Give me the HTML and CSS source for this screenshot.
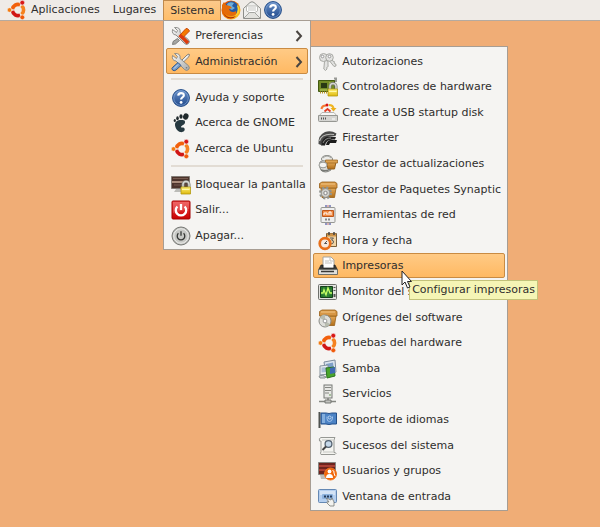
FILE: index.html
```html
<!DOCTYPE html>
<html lang="es">
<head>
<meta charset="utf-8">
<meta name="viewport" content="width=device-width, initial-scale=1">
<title>Escritorio</title>
<link rel="stylesheet" href="styles.css">
</head>
<body>
<svg class="defs" aria-hidden="true">
  <defs>
    <linearGradient id="steel" x2="1" y2="1"><stop stop-color="#fafafa"/><stop offset="1" stop-color="#a9aaa8"/></linearGradient>
    <linearGradient id="blue" x2="0" y2="1"><stop stop-color="#6d94cb"/><stop offset="1" stop-color="#1d4689"/></linearGradient>
    <linearGradient id="gold" x2="0" y2="1"><stop stop-color="#fff27a"/><stop offset="1" stop-color="#dfb80b"/></linearGradient>
    <linearGradient id="box" x2="0" y2="1"><stop stop-color="#e6ab5a"/><stop offset="1" stop-color="#b06d18"/></linearGradient>
    <linearGradient id="red" x2="0" y2="1"><stop stop-color="#ef4a4a"/><stop offset="1" stop-color="#c80000"/></linearGradient>
    <linearGradient id="fox" x2="1" y2="1"><stop stop-color="#d83a00"/><stop offset=".55" stop-color="#f08300"/><stop offset="1" stop-color="#ffd93a"/></linearGradient>

    <symbol id="ubuntu" viewBox="0 0 20 20">
      <g fill="none" stroke-width="3.6">
        <path d="M5.450 9.220A5.600 5.600 0 0 1 13.100 4.810" stroke="#f2600c"/>
        <path d="M14.450 5.590A5.600 5.600 0 0 1 14.450 14.410" stroke="#f58220"/>
        <path d="M13.100 15.190A5.600 5.600 0 0 1 5.450 10.780" stroke="#d01616"/>
      </g>
      <g stroke="#f5f4f2" stroke-width=".6"><circle cx="2.500" cy="10" r="2.300" fill="#f47b10"/><circle cx="15.300" cy="2.700" r="2.400" fill="#d81717"/><circle cx="15.300" cy="17.300" r="2.400" fill="#f05a0a"/></g>
    </symbol>
    <symbol id="firefox" viewBox="0 0 20 20">
      <circle cx="10" cy="10" r="9.500" fill="url(#fox)"/>
      <circle cx="10.500" cy="8.400" r="7.100" fill="#245aa3"/><path d="M6 4q3-3 7-1l-2 3 3 2-3 2-4-2z" fill="#6caed8"/>
      <path d="M1 5 3 2l2 3 4 1 2 2-3 1 1 2q3 2 6 0 2 4-4 5-8 0-10-7z" fill="#e46b08"/>
      <path d="M17 5q4 8-3 11 4-5 2-10z" fill="#ffd52d"/><path d="M2 12q4 8 13 4-5 5-11 0z" fill="#a92a09"/>
    </symbol>
    <symbol id="mail" viewBox="0 0 20 20">
      <path d="M1.500 8.500 8 2.500q2-1.500 4 0l6.500 6V18.500h-17z" fill="#eeeeec" stroke="#8d8e8a"/>
      <path d="M4.500 6h11v5L10 14l-5.500-3z" fill="#fff" stroke="#bcbcb8"/><path d="M6 8h8M6 10h8" stroke="#c5c5c1"/>
      <path d="m2 18 5.500-5.500h5L18 18" fill="#e2e2de" stroke="#a3a4a0"/>
    </symbol>
    <symbol id="help" viewBox="0 0 20 20">
      <circle cx="10" cy="10" r="8.400" fill="url(#blue)" stroke="#204a87"/><circle cx="10" cy="10" r="7.300" fill="none" stroke="#83a5d5" stroke-width=".7"/>
      <path d="M7.200 7.700q.2-2.600 2.900-2.600t2.700 2.300c0 1.800-2.700 2-2.700 4.200" fill="none" stroke="#fff" stroke-width="2.200"/><circle cx="10.100" cy="14.400" r="1.400" fill="#fff"/>
    </symbol>
    <symbol id="wrench" viewBox="0 0 20 20">
      <path d="M3.500 1.500 6.500 4.500 5.500 6.500 1.500 3.500Q.5 8.500 5 9l8.500 8.500q2 1.800 3.900.2t.1-4L9 6.500q1-5.500-5.500-5z" fill="url(#steel)" stroke="#858682" stroke-width=".9"/><circle cx="15.500" cy="15.800" r=".8" fill="#777"/>
    </symbol>
    <symbol id="prefs" viewBox="0 0 20 20">
      <use href="#wrench"/>
      <path d="m6.500 12.500 2 2L4.500 18l-3 .5.500-3z" fill="#a5a6a3" stroke="#61625f" stroke-width=".7"/><path d="M9 9 15 2.500q2-.500 3.500 2.500L11.500 12z" fill="#f57900" stroke="#c94808"/><path d="m8.500 9 5 4.500 3.500 3.500" stroke="#dd3b0d" stroke-width="3.400"/>
    </symbol>
    <symbol id="admin" viewBox="0 0 20 20">
      <path d="m8 11 8-8 2-1 .5 1-1 2-8 8z" fill="#eee" stroke="#6b6c69" stroke-width=".8"/><use href="#wrench"/>
      <path d="m2 15 5-4.500 3 3L5 18q-2 1.500-3.500 0T2 15z" fill="#7c9fca" stroke="#315b91"/><path d="m3 16.500 4-4" stroke="#c9dbf1"/>
    </symbol>
    <symbol id="gnome" viewBox="0 0 20 20">
      <path d="M13.500 7.500C8 6 4 8 4 11.500c0 3 2 6.500 5 7.500 3 .8 5.500-1.500 4.500-3.500s-3 0-3.500-1.500 6-2.500 3.500-6.500z" fill="#263940"/><g fill="#20292c"><ellipse cx="14.800" cy="3.500" rx="2.700" ry="3.200" transform="rotate(22 14.800 3.500)"/><ellipse cx="10" cy="3.500" rx="1.600" ry="2.300"/><ellipse cx="6.500" cy="5.200" rx="1.300" ry="2"/><ellipse cx="3.800" cy="7.500" rx="1.100" ry="1.600"/></g>
    </symbol>
    <symbol id="padlock" viewBox="0 0 20 20">
      <path d="M12 13V9.500a3 3 0 0 1 6 0V13" fill="none" stroke="#777872" stroke-width="3"/><path d="M12 13V9.500a3 3 0 0 1 6 0V13" fill="none" stroke="#d6d6d1" stroke-width="1.500"/><path d="M10 12h9.500v7H10z" fill="url(#gold)" stroke="#b39a12" stroke-width=".8"/><path d="M11 14.500h7.500" stroke="#fff8a8"/>
    </symbol>
    <symbol id="lock" viewBox="0 0 20 20"><path d="M.500 1.500h18v12H.500z" fill="#4d342c" stroke="#837d77"/><path d="M1 7h17" stroke="#aa8d7c" stroke-width="2"/><path d="M2 3.500h15M3 10h14" stroke="#765b50"/><path d="M5 14h8v3H3z" fill="#bcbcb8"/><use href="#padlock"/></symbol>
    <symbol id="logout" viewBox="0 0 20 20"><rect x="1" y="1" width="18" height="18" rx="1" fill="url(#red)" stroke="#a40000"/><path d="M2 2h16v7Q10 11 2 13z" fill="#fff" opacity=".16"/><path d="M6.400 6.500a5.200 5.200 0 1 0 7.200 0M10 4v6" fill="none" stroke="#fff" stroke-width="2.300"/></symbol>
    <symbol id="power" viewBox="0 0 20 20"><circle cx="10" cy="10" r="9" fill="#babbb8" stroke="#777875"/><circle cx="10" cy="10" r="7.300" fill="#c7c8c5" stroke="#eeeeec"/><path d="M7.400 7.300a3.800 3.800 0 1 0 5.200 0M10 5.300v4.500" fill="none" stroke="#343634" stroke-width="1.300"/></symbol>
    <symbol id="keys" viewBox="0 0 20 20"><g fill="#e3e3e1" stroke="#a0a19c" stroke-width=".9"><path d="M8 8.500 6.500 9.500 5.800 17l1.700 1.500 1.500-1.500-.3-1.500 1.500-1-.2-1.500L10 9z"/><path d="m10 7 6 7.500 2-.5-.2-2-1.500-.5v-2l-1.500-.3L13 6z"/><circle cx="5.500" cy="5.500" r="4"/><circle cx="11.500" cy="5.500" r="3.800"/></g><circle cx="4.500" cy="4.500" r="1.300" fill="#fff" stroke="#999"/><circle cx="11.500" cy="4.500" r="1.300" fill="#fff" stroke="#999"/></symbol>
    <symbol id="drivers" viewBox="0 0 20 20"><path d="M16 1.500h2V4h-2v10" fill="none" stroke="#999a96" stroke-width="2"/><path d="M.500 3.500h16v11H.500z" fill="#738b27" stroke="#435910"/><path d="M3 6h6v5H3z" fill="#293913"/><path d="M11 6h3M11 8h3M2 13h7" stroke="#bed064"/><path d="M2 15.500h8" stroke="#bd9a25" stroke-width="2" stroke-dasharray="1 1"/><use href="#padlock"/></symbol>
    <symbol id="usb" viewBox="0 0 20 20"><path d="M1 13 4 9.500h12l3 3.500z" fill="#f6f6f5" stroke="#b7b7b3"/><path d="M.500 12.500h19v5q0 1-1 1h-17q-1 0-1-1z" fill="#d5d5d2" stroke="#969793"/><path d="M3 15.500h6" stroke="#555" stroke-width="2" stroke-dasharray="1 1"/><path d="M14 16h3" stroke="#fff"/><path d="M3.500 6Q4 2.500 8 2.500" fill="none" stroke="#f57930" stroke-width="2.200"/><path d="M11 2q4 0 4.500 3.500" fill="none" stroke="#efb522" stroke-width="2.200"/><path d="m12.500 5 6 0-3 3.500z" fill="#edb017"/><path d="m6.500 8.500 3-2.500 3 2.500" fill="none" stroke="#e13a23" stroke-width="1.800"/><circle cx="9" cy="2" r="1.500" fill="#d81212"/></symbol>
    <symbol id="fire" viewBox="0 0 20 20"><path d="M.500 16Q0 7 7 4q6-2 11.500 1.500l-1 2.500Q6 7 3 17z" fill="#4a4a49"/><path d="M1.500 13Q4 5 16 6.500" fill="none" stroke="#b9b9b6" stroke-width="1.200"/><path d="M3 17.500Q4 8 12 8.500l6 .5-1 2.500Q8 10.500 7 17.500z" fill="#222"/><path d="M8 17q1-5 5-5h6l-1 3h-6l-1 2z" fill="#1c1c1c"/><path d="M5 15q2-5 8-5" fill="none" stroke="#8b8b88"/></symbol>
    <symbol id="crate" viewBox="0 0 20 20"><path d="M3 8h15l-1.500 9.500H4z" fill="url(#box)" stroke="#986018" stroke-width=".8"/><path d="M1.500 3.500 4 2h13l2 1.500V8H1.500z" fill="#d79745" stroke="#986018" stroke-width=".8"/><path d="M3 4h14" stroke="#f3c787"/><path d="M8 11h5" stroke="#75460b" stroke-width="1.500"/></symbol>
    <symbol id="update" viewBox="0 0 20 20"><ellipse cx="9" cy="5" rx="5.500" ry="3.500" fill="#ecece9" stroke="#858782"/><path d="M5 4q4-4 8 0" fill="none" stroke="#a4a5a1"/><path d="M2 8q4-3 8 1l3 7q-6 4-10 0-3-4-1-8z" fill="#d9d9d5" stroke="#858782"/><path d="M8.500 8h9.500l-1.500 7h-6.500z" fill="url(#box)" stroke="#96601a"/><path d="M7.500 6h12v3h-12z" fill="#dda250" stroke="#96601a" stroke-width=".7"/><ellipse cx="5" cy="11" rx="4" ry="2.800" fill="#f4f4f2" stroke="#999a96"/><path d="M3 16q5 2 9-1" fill="none" stroke="#777975" stroke-width="1.500"/></symbol>
    <symbol id="package" viewBox="0 0 20 20"><use href="#crate"/><g transform="translate(7.500 13)"><circle r="5.400" fill="none" stroke="#91938f" stroke-width="2.200" stroke-dasharray="2.200 2.041"/><circle r="4.400" fill="#cfcfcb" stroke="#91938f"/><circle r="1.700" fill="#f6f6f4" stroke="#888"/></g></symbol>
    <symbol id="network" viewBox="0 0 20 20"><path d="M8 0v3M12 0v3M8 17v3M12 17v3" stroke="#6f76b4" stroke-width="1.500"/><path d="M10 0v3M10 17v3" stroke="#bd6f6f"/><rect x="3" y="2.500" width="14" height="15" rx="1" fill="#eee" stroke="#969793"/><path d="M4.500 5.500h11v6h-11z" fill="#f18a43" stroke="#bd571c"/><path d="M6 10V8h3v2M11 10V7h2v3" fill="none" stroke="#fff"/><path d="M7 14.500h6" stroke="#888" stroke-width="2" stroke-dasharray="2 1"/></symbol>
    <symbol id="clock" viewBox="0 0 20 20"><path d="M8.500 2.500h10v13h-10z" fill="#f1d5a6" stroke="#795f3c"/><path d="M9 4h9" stroke="#cc9145" stroke-width="3"/><path d="M11 1v3M16 1v3" stroke="#444" stroke-width="1.500"/><path d="M12 7h3.500l-2 2q2 0 2 2t-3 2" fill="none" stroke="#555"/><circle cx="7" cy="12.500" r="5.300" fill="#f7e9dc" stroke="#e8701a" stroke-width="2.700"/><path d="M6.500 12.500 9 10M6.500 12.500h2.500" stroke="#555"/></symbol>
    <symbol id="printer" viewBox="0 0 20 20"><path d="M5 1h8l3 3v9H5z" fill="#fff" stroke="#a5a5a0"/><path d="M12 1v4h4M7 5h4M7 7h7" fill="none" stroke="#c1c1bd"/><path d="M3 9h2v3h11V9h1l2.500 5H.500z" fill="#3a3b39" stroke="#1e1f1d" stroke-width=".7"/><path d="M.500 13.500h19v5H.500z" fill="#dfdfdc" stroke="#6e706b"/><path d="M3 15.500h13" stroke="#383938" stroke-width="1.500"/></symbol>
    <symbol id="monitor" viewBox="0 0 20 20"><rect x=".500" y="2.500" width="18" height="15" rx="1" fill="#e2e2df" stroke="#6e706c"/><path d="M2.500 4.500h12v11h-12z" fill="#23762b" stroke="#143d19"/><path d="M3 8h11M3 12h11M6 5v10M10 5v10" stroke="#499d4b" stroke-width=".6"/><path d="M3 11h2l1-3 2 5 2-7 2 5h2" fill="none" stroke="#c7ff65" stroke-width="1.300"/><path d="M16.500 5v1M16.500 8v1M16.500 12v3" stroke="#555" stroke-width="2"/></symbol>
    <symbol id="sources" viewBox="0 0 20 20"><use href="#crate"/><circle cx="7" cy="13" r="6" fill="#deded9" stroke="#8a8b87"/><path d="m7 13-5-3q2-4 5-3zM7 13l5 3q-2 3-5 3z" fill="#b8bcaf"/><circle cx="7" cy="13" r="1.900" fill="#fff" stroke="#999"/></symbol>
    <symbol id="samba" viewBox="0 0 20 20"><path d="m6 3 11-2 1 12-10 3z" fill="#dce5ef" stroke="#7d8c9d"/><path d="m8 5 7-1.500L16 11l-7 2z" fill="#7e9fc8"/><path d="m2 7 8-1v9l-8 1z" fill="#eaedef" stroke="#84929d"/><path d="M3.500 8.500 9 8v5l-5.500.5z" fill="#a9bdd5"/><path d="m8 9 8-1 1 9-8 2z" fill="#49a62c" stroke="#2b741e"/><path d="m12 9 5-1v6l-5 1z" fill="#3f69b3"/><path d="M1 17q3-2 7 1l-1 1H2z" fill="#cbd2d5" stroke="#858d8f"/></symbol>
    <symbol id="services" viewBox="0 0 20 20"><rect x="6" y="1" width="8" height="13" fill="#e7e7e4" stroke="#777975"/><path d="M7 3.500h6M7 6.500h6M7 9h4" stroke="#858782" stroke-width="1.200"/><circle cx="12" cy="11" r=".8" fill="#589143"/><path d="M10 14v3M1 17.500h17" stroke="#858782" stroke-width="1.600"/><path d="M7 16h6v3H7z" fill="#c2c3bf" stroke="#777975"/></symbol>
    <symbol id="flag" viewBox="0 0 20 20"><path d="M1.500 2v16" stroke="#4f5350" stroke-width="2"/><path d="M3 3h5q3 1 6 0h4.500v11H14q-3 1-6 0H3z" fill="#4c83c5" stroke="#234f89"/><path d="M4 4h3v9H4z" fill="#83aedd"/><path d="M9 6.500v2q0 3 2.500 3t3-3v-2" fill="none" stroke="#a5c5ea"/><circle cx="11.700" cy="7.500" r="1.500" fill="none" stroke="#b9d4f1"/></symbol>
    <symbol id="log" viewBox="0 0 20 20"><path d="M3 1.500h14q-1 1.500-1 3v12q2 0 2 1l-1 1H3q-1-1 0-3V5H1.500q-1-3 1.500-3.500z" fill="#f4f4f0" stroke="#969894"/><path d="M4 4h11M5 16h11" stroke="#c5c6c2"/><circle cx="10.500" cy="8" r="3.400" fill="#c5d8e9" stroke="#53616f" stroke-width="1.300"/><path d="m8 10.500-3.500 3.500" stroke="#444" stroke-width="2"/></symbol>
    <symbol id="users" viewBox="0 0 20 20"><path d="M.500 1.500h17v12H.500z" fill="#6d241e" stroke="#858580"/><path d="M1 5h16M1 9h16" stroke="#aa4035" stroke-width="2"/><path d="M2 14h9v4H3z" fill="#bcbcb8"/><circle cx="12.500" cy="13" r="6" fill="#f16608" stroke="#f37a22"/><circle cx="11.500" cy="10.500" r="1.900" fill="#fff"/><path d="M8 17q0-4 3.500-4t3.500 4z" fill="#fff"/><path d="M14.500 9.500q2 0 1.500 2.500l1 3" fill="none" stroke="#fff"/></symbol>
    <symbol id="login" viewBox="0 0 20 20"><rect x=".500" y="2.500" width="18" height="13" rx="1" fill="#b5cfef" stroke="#6488b4"/><path d="M2 4h15v4H2z" fill="#d4e3f5"/><rect x="4" y="7" width="11" height="5" rx="1" fill="#8db2dd"/><path d="M6 9.500h8" stroke="#243b5b" stroke-width="2" stroke-dasharray="2 1"/><path d="m8 11 5 2 1-2 2 4v4h-4l-3-3q-1-2 2-1z" fill="#f2f2ef" stroke="#777975" stroke-width=".8"/></symbol>
    <symbol id="arrow" viewBox="0 0 8 12"><path d="M1.500 1 6 6l-4.500 5" fill="none" stroke="#4a4541" stroke-width="2"/></symbol>
  </defs>
</svg>

<nav class="panel" aria-label="Panel">
  <button class="panel-button"><svg class="icon"><use href="#ubuntu"/></svg>Aplicaciones</button>
  <button class="panel-button">Lugares</button>
  <div class="dropdown">
    <button class="panel-button active" aria-expanded="true">Sistema</button>
    <ul class="menu">
      <li><button class="item"><svg class="icon"><use href="#prefs"/></svg>Preferencias<svg class="arrow"><use href="#arrow"/></svg></button></li>
      <li>
        <button class="item active" aria-expanded="true"><svg class="icon"><use href="#admin"/></svg>Administración<svg class="arrow"><use href="#arrow"/></svg></button>
        <ul class="menu submenu">
          <li><button class="item"><svg class="icon"><use href="#keys"/></svg>Autorizaciones</button></li>
          <li><button class="item"><svg class="icon"><use href="#drivers"/></svg>Controladores de hardware</button></li>
          <li><button class="item"><svg class="icon"><use href="#usb"/></svg>Create a USB startup disk</button></li>
          <li><button class="item"><svg class="icon"><use href="#fire"/></svg>Firestarter</button></li>
          <li><button class="item"><svg class="icon"><use href="#update"/></svg>Gestor de actualizaciones</button></li>
          <li><button class="item"><svg class="icon"><use href="#package"/></svg>Gestor de Paquetes Synaptic</button></li>
          <li><button class="item"><svg class="icon"><use href="#network"/></svg>Herramientas de red</button></li>
          <li><button class="item"><svg class="icon"><use href="#clock"/></svg>Hora y fecha</button></li>
          <li>
            <button class="item active" aria-describedby="tip"><svg class="icon"><use href="#printer"/></svg>Impresoras</button>
            <span class="tooltip" id="tip" role="tooltip">Configurar impresoras</span>
            <svg class="cursor" viewBox="0 0 12 20" aria-hidden="true"><path d="M1 1v14l3-3 2.500 6 2.500-1-2.500-5.500h4z" fill="#fff" stroke="#222"/></svg>
          </li>
          <li><button class="item"><svg class="icon"><use href="#monitor"/></svg>Monitor del sistema</button></li>
          <li><button class="item"><svg class="icon"><use href="#sources"/></svg>Orígenes del software</button></li>
          <li><button class="item"><svg class="icon"><use href="#ubuntu"/></svg>Pruebas del hardware</button></li>
          <li><button class="item"><svg class="icon"><use href="#samba"/></svg>Samba</button></li>
          <li><button class="item"><svg class="icon"><use href="#services"/></svg>Servicios</button></li>
          <li><button class="item"><svg class="icon"><use href="#flag"/></svg>Soporte de idiomas</button></li>
          <li><button class="item"><svg class="icon"><use href="#log"/></svg>Sucesos del sistema</button></li>
          <li><button class="item"><svg class="icon"><use href="#users"/></svg>Usuarios y grupos</button></li>
          <li><button class="item"><svg class="icon"><use href="#login"/></svg>Ventana de entrada</button></li>
        </ul>
      </li>
      <li class="separator" role="separator"></li>
      <li><button class="item"><svg class="icon"><use href="#help"/></svg>Ayuda y soporte</button></li>
      <li><button class="item"><svg class="icon"><use href="#gnome"/></svg>Acerca de GNOME</button></li>
      <li><button class="item"><svg class="icon"><use href="#ubuntu"/></svg>Acerca de Ubuntu</button></li>
      <li class="separator" role="separator"></li>
      <li><button class="item"><svg class="icon"><use href="#lock"/></svg>Bloquear la pantalla</button></li>
      <li><button class="item"><svg class="icon"><use href="#logout"/></svg>Salir...</button></li>
      <li><button class="item"><svg class="icon"><use href="#power"/></svg>Apagar...</button></li>
    </ul>
  </div>
  <div class="launchers">
    <button class="launcher" aria-label="Firefox"><svg class="icon"><use href="#firefox"/></svg></button>
    <button class="launcher" aria-label="Correo"><svg class="icon"><use href="#mail"/></svg></button>
    <button class="launcher" aria-label="Ayuda"><svg class="icon"><use href="#help"/></svg></button>
  </div>
</nav>
</body>
</html>
```
FILE: styles.css
```css
* {
  box-sizing: border-box;
}

body {
  margin: 0;
  min-height: 100vh;
  background: #f0ad76;
  color: #2f2e2d;
  font: 11px/16px "DejaVu Sans", sans-serif;
}

.defs {
  position: absolute;
  width: 0;
  height: 0;
}

button {
  margin: 0;
  padding: 0;
  border: 0;
  background: none;
  color: inherit;
  font: inherit;
}

.icon {
  flex: none;
  width: 20px;
  height: 20px;
}

.panel {
  display: flex;
  height: 21px;
  padding-left: 1px;
  background: #efebe7;
  border-bottom: 1px solid #b5aaa0;
}

.panel-button {
  display: flex;
  align-items: center;
  gap: 4px;
  height: 20px;
  padding: 0 6px;
}

.panel-button:nth-child(2) {
  padding: 0 7px;
}

.dropdown {
  position: relative;
}

.dropdown > .panel-button {
  height: 21px;
  border: 1px solid #c08a4d;
  border-bottom-color: #a79d93;
  background: linear-gradient(#fbc98b, #ffbd69);
}

.menu {
  position: absolute;
  top: 20px;
  left: 0;
  z-index: 1;
  width: 148px;
  margin: 0;
  padding: 1px 2px;
  border: 1px solid #a79d93;
  background: #f5f4f2;
  list-style: none;
}

.menu > li {
  position: relative;
  display: flex;
  height: 26px;
}

.menu > .separator {
  height: 10px;
  margin: 0 5px;
  align-items: center;
}

.separator::before {
  content: "";
  flex: 1;
  height: 2px;
  background: #e2dcd4;
}

.menu > li:nth-child(5),
.menu > li:nth-child(9) {
  height: 25px;
}

.menu.submenu {
  top: -2px;
  left: 144px;
  width: 198px;
}

.submenu > li:nth-child(n) {
  height: 26px;
}

.submenu > li:nth-child(5n + 2),
.submenu > li:nth-child(5n + 4) {
  height: 25px;
}

.item {
  display: flex;
  flex: 1;
  align-items: center;
  gap: 4px;
  padding: 1px 4px 0;
  border: 1px solid transparent;
  border-radius: 2px;
  text-align: left;
  white-space: nowrap;
}

.item.active {
  border-color: #c98b43;
  background: linear-gradient(#ffca85, #ffb963);
}

.arrow {
  width: 8px;
  height: 12px;
  margin-left: auto;
}

.tooltip {
  position: absolute;
  top: 27px;
  left: 96px;
  z-index: 2;
  padding: 1px 2px;
  border: 1px solid #c3c27a;
  background: #f5f5b5;
  white-space: nowrap;
}

.cursor {
  position: absolute;
  top: 17px;
  left: 88px;
  z-index: 3;
  width: 12px;
  height: 20px;
}

.launchers {
  display: flex;
  gap: 1px;
}

.launcher {
  display: flex;
}
```
